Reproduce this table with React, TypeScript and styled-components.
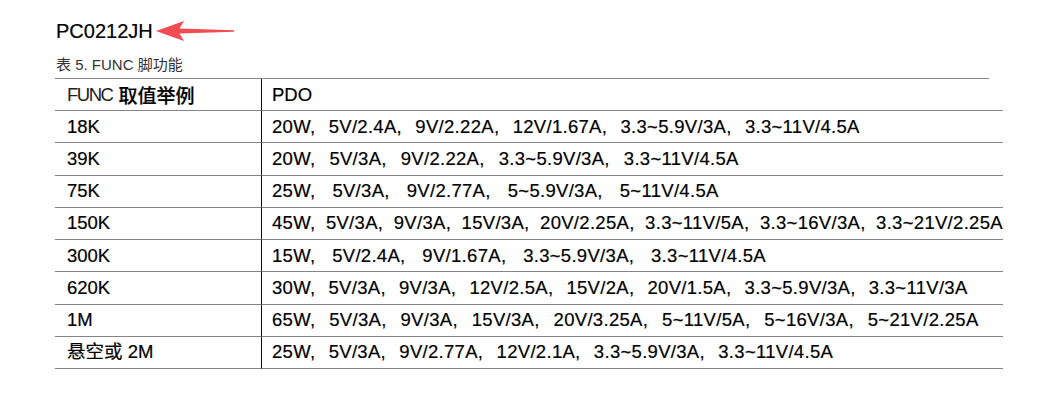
import styled, { createGlobalStyle } from 'styled-components';

const GlobalStyle = createGlobalStyle`
  html, body {
    margin: 0;
    padding: 0;
    background: #ffffff;
  }

  body {
    font-family: "Liberation Sans", "Noto Sans CJK SC", sans-serif;
    color: #111111;
  }
`;

interface PdoRow {
  func: string;
  gap: number;
  items: string[];
}

const rows: PdoRow[] = [
  { func: '18K', gap: 13.3, items: ['20W', '5V/2.4A', '9V/2.22A', '12V/1.67A', '3.3~5.9V/3A', '3.3~11V/4.5A'] },
  { func: '39K', gap: 14, items: ['20W', '5V/3A', '9V/2.22A', '3.3~5.9V/3A', '3.3~11V/4.5A'] },
  { func: '75K', gap: 17, items: ['25W', '5V/3A', '9V/2.77A', '5~5.9V/3A', '5~11V/4.5A'] },
  {
    func: '150K',
    gap: 10.5,
    items: ['45W', '5V/3A', '9V/3A', '15V/3A', '20V/2.25A', '3.3~11V/5A', '3.3~16V/3A', '3.3~21V/2.25A'],
  },
  { func: '300K', gap: 16.8, items: ['15W', '5V/2.4A', '9V/1.67A', '3.3~5.9V/3A', '3.3~11V/4.5A'] },
  {
    func: '620K',
    gap: 13.1,
    items: ['30W', '5V/3A', '9V/3A', '12V/2.5A', '15V/2A', '20V/1.5A', '3.3~5.9V/3A', '3.3~11V/3A'],
  },
  {
    func: '1M',
    gap: 13.9,
    items: ['65W', '5V/3A', '9V/3A', '15V/3A', '20V/3.25A', '5~11V/5A', '5~16V/3A', '5~21V/2.25A'],
  },
  { func: '悬空或 2M', gap: 13.3, items: ['25W', '5V/3A', '9V/2.77A', '12V/2.1A', '3.3~5.9V/3A', '3.3~11V/4.5A'] },
];

function ArrowMark() {
  return (
    <Arrow width="80" height="22" viewBox="0 0 80 22" aria-hidden="true">
      <path d="M0 11 L28 1 L23.5 8.6 L78 10.2 L78 11.8 L23.5 13.4 L28 21 Z" fill="#f04c52" />
    </Arrow>
  );
}

export default function App() {
  return (
    <Page>
      <GlobalStyle />
      <TitleRow>
        <Title>PC0212JH</Title>
        <ArrowMark />
      </TitleRow>
      <Caption>表 5. FUNC 脚功能</Caption>
      <Table>
        <FuncCell>
          <HeadLatin>FUNC</HeadLatin>
          <HeadCjk>取值举例</HeadCjk>
        </FuncCell>
        <PdoCell>PDO</PdoCell>
        {rows.map((row) => (
          <Row key={row.func} row={row} />
        ))}
      </Table>
    </Page>
  );
}

function Row({ row }: { row: PdoRow }) {
  return (
    <>
      <FuncCell>{row.func}</FuncCell>
      <PdoCell>
        <PdoList $gap={row.gap}>
          {row.items.map((item, i) => (
            <PdoItem key={item + i}>
              {item}
              {i < row.items.length - 1 ? ',' : ''}
            </PdoItem>
          ))}
        </PdoList>
      </PdoCell>
    </>
  );
}

const Page = styled.div`
  padding: 19px 0 0 55px;
  width: 934px;
`;

const TitleRow = styled.div`
  display: flex;
  align-items: center;
  gap: 3px;
  padding-left: 1px;
`;

const Title = styled.h1`
  margin: 0;
  font-size: 20px;
  font-weight: 400;
  line-height: 24px;
  color: #000000;
  -webkit-text-stroke: 0.2px #000000;
`;

const Arrow = styled.svg`
  display: block;
  flex: none;
`;

const Caption = styled.p`
  margin: 13px 0 4px 1px;
  font-size: 15px;
  line-height: 18px;
  color: #333333;
`;

const Table = styled.div`
  display: grid;
  grid-template-columns: 207px 1fr;
  grid-auto-rows: 32.22px;
  border-top: 1px solid #858585;
`;

const Cell = styled.div`
  box-sizing: border-box;
  display: flex;
  align-items: center;
  border-bottom: 1px solid #858585;
  font-size: 18.5px;
  line-height: 22px;
  white-space: nowrap;
  color: #000000;
  -webkit-text-stroke: 0.2px #000000;
`;

const FuncCell = styled(Cell)`
  padding-left: 12px;
  border-right: 1px solid #111111;
`;

const PdoCell = styled(Cell)`
  padding-left: 10px;
  overflow: visible;
`;

const HeadLatin = styled.span`
  letter-spacing: -1.5px;
  color: #222222;
  -webkit-text-stroke: 0;
  margin-right: 6px;
`;

const HeadCjk = styled.span`
  font-family: "Noto Sans CJK SC", sans-serif;
  font-weight: 500;
  font-size: 19px;
`;

const PdoList = styled.div<{ $gap: number }>`
  display: flex;
  gap: ${(p) => p.$gap}px;
`;

const PdoItem = styled.span`
  letter-spacing: 0.3px;
`;
